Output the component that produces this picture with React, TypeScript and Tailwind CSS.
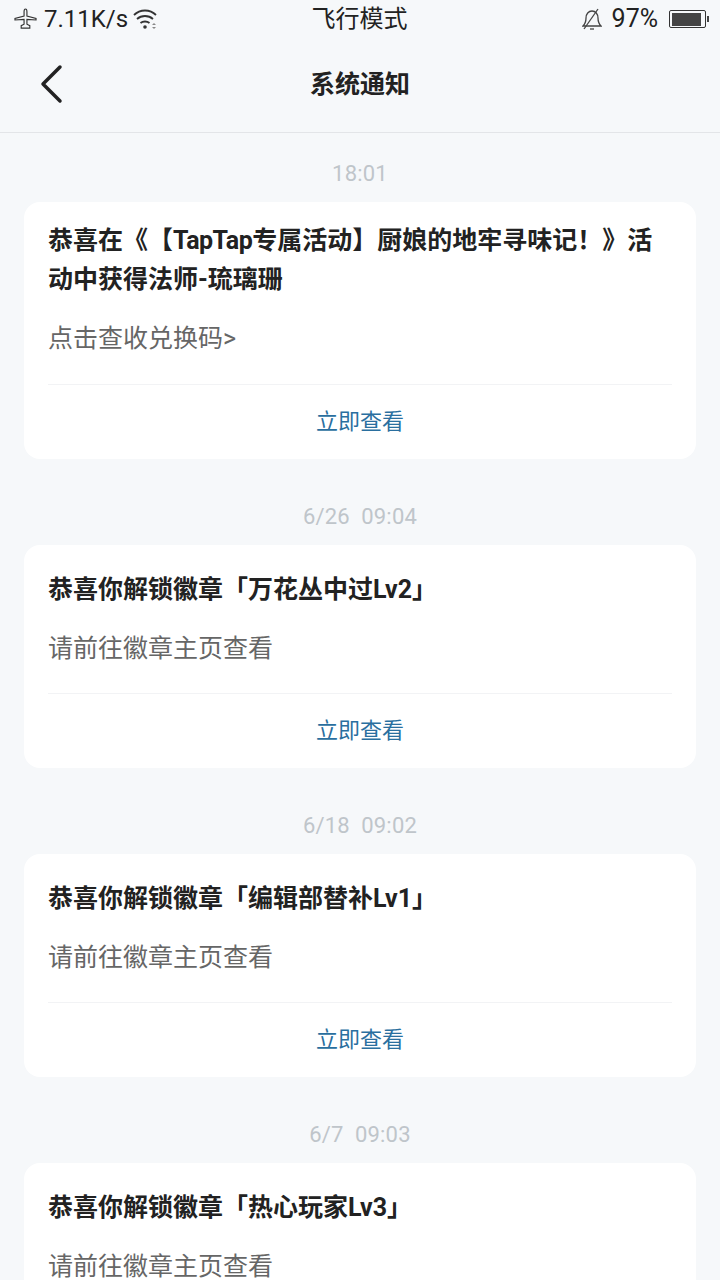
import type { ReactNode } from "react";

const FONT = "font-['Roboto','Noto_Sans_CJK_SC',sans-serif]";

const notices: { time: string; title: ReactNode; desc: string; multi?: boolean }[] = [
  {
    time: "18:01",
    title: (
      <>
        恭喜在《【<span className="tracking-[-0.5px]">TapTap</span>专属活动】厨娘的地牢寻味记！》活动中获得法师-琉璃珊
      </>
    ),
    desc: "点击查收兑换码>",
    multi: true,
  },
  { time: "6/26  09:04", title: "恭喜你解锁徽章「万花丛中过Lv2」", desc: "请前往徽章主页查看" },
  { time: "6/18  09:02", title: "恭喜你解锁徽章「编辑部替补Lv1」", desc: "请前往徽章主页查看" },
  { time: "6/7  09:03", title: "恭喜你解锁徽章「热心玩家Lv3」", desc: "请前往徽章主页查看" },
];

function StatusBar() {
  return (
    <div className="flex h-[38px] items-center justify-between pl-[14px] pr-[11px] text-[25px] text-[#222]">
      <div className="flex w-[200px] items-center">
        <svg width="23" height="22" viewBox="0 0 24 23" fill="none" stroke="#333" strokeWidth="1.2">
          <path d="M12 1c1 0 1.500 1.500 1.500 3v4.500l9.500 2.500v1.500l-9.500-.5v5l3 1.500v2.500h-9v-2.500l3-1.500v-5l-9.500.5v-1.500l9.500-2.500v-4.500c0-1.500.5-3 1.500-3z" />
        </svg>
        <span className="ml-[7px] text-[24px]">7.11K/s</span>
        <svg className="ml-[5px]" width="26" height="22" viewBox="0 0 26 22" fill="none" stroke="#333" strokeWidth="1.800">
          <path d="M1 7c6-6 16-6 22 0" />
          <path d="M4 11c4.500-4 11.500-4 16 0" />
          <path d="M7.500 15c2.500-2 6.500-2 9 0" />
          <circle cx="12" cy="19" r="1.800" fill="#333" stroke="none" />
          <path d="M21 15l2 2h-4zM21 21l2-2h-4z" fill="#888" stroke="none" />
        </svg>
      </div>
      <span className="text-[24px]">飞行模式</span>
      <div className="flex w-[204px] items-center justify-end">
        <svg width="20" height="22" viewBox="0 0 20 22" fill="none" stroke="#444" strokeWidth="1.300">
          <path d="M1 18c2-2 3-4 3-8 0-4 2.500-7 6-7s6 3 6 7c0 4 1 6 3 8z" />
          <path d="M8 21h4" />
          <path d="M2 21L16 1" />
        </svg>
        <span className="ml-[10px]">97%</span>
        <div className="ml-[11px] flex items-center">
          <div className="h-[18px] w-[37px] rounded-[2px] border border-[#333] p-[1.500px]">
            <div className="h-full w-[93%] bg-[#444]" />
          </div>
          <div className="ml-[1px] h-[6px] w-[2px] bg-[#444]" />
        </div>
      </div>
    </div>
  );
}

function NoticeCard({ title, desc, multi }: { title: ReactNode; desc: string; multi?: boolean }) {
  return (
    <div className="rounded-[16px] bg-white">
      <div className={`px-[24px] ${multi ? "pb-[25px] pt-[19px]" : "pb-[24px] pt-[25px]"}`}>
        <div className="text-[25px] font-bold leading-[39px] text-[#222] [text-spacing-trim:space-all]">{title}</div>
        <div className="mt-[20px] text-[25px] leading-[40px] text-[#666]">{desc}</div>
      </div>
      <div className="mx-[24px] h-px bg-[#f2f3f5]" />
      <div className="flex h-[74px] items-center justify-center pb-[2px] text-[22px] text-[#2a6f9f]">立即查看</div>
    </div>
  );
}

export default function App() {
  return (
    <div className={`h-[1280px] w-[720px] overflow-hidden bg-[#f6f8fa] ${FONT}`}>
      <StatusBar />
      <div className="relative flex h-[95px] items-center justify-center border-b border-[#e3e5e8]">
        <svg className="absolute left-[38px] top-[24px]" width="26" height="42" viewBox="0 0 26 42" fill="none" stroke="#222" strokeWidth="3.500" strokeLinecap="round" strokeLinejoin="round">
          <path d="M22 5L5 22l17 17" />
        </svg>
        <span className="text-[25px] font-bold text-[#222]">系统通知</span>
      </div>
      <div className="px-[24px]">
        {notices.map((n) => (
          <div key={n.time}>
            <div className="flex h-[69px] items-center justify-center whitespace-pre pt-[12px] text-[22px] tracking-[0.2px] text-[#bfc5ca]">
              {n.time}
            </div>
            <NoticeCard title={n.title} desc={n.desc} multi={n.multi} />
            <div className="h-[17px]" />
          </div>
        ))}
      </div>
    </div>
  );
}
